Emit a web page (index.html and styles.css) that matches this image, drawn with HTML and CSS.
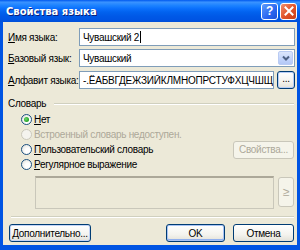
FILE: index.html
```html
<!DOCTYPE html>
<html lang="ru">
  <head>
    <meta charset="UTF-8" />
    <title>Свойства языка</title>
    <link rel="stylesheet" href="styles.css">
  </head>
  <body>
    <div class="window">
      <div class="titlebar">
        <span class="title">Свойства языка</span>
        <span class="tb-btn help">?</span>
        <span class="tb-btn close">
          <svg width="10" height="10" viewBox="0 0 10 10"><path d="M1.5 1.5 L8.5 8.5 M8.5 1.5 L1.5 8.5" stroke="#fff" stroke-width="2" stroke-linecap="square"/></svg>
        </span>
      </div>
      <div class="client">
        <div class="row">
          <label class="lbl"><u>И</u>мя языка:</label>
          <div class="field">Чувашский 2<span class="caret"></span></div>
        </div>
        <div class="row">
          <label class="lbl"><u>Б</u>азовый язык:</label>
          <div class="field combo">
            <span class="val">Чувашский</span>
            <span class="drop">
              <svg width="8" height="6" viewBox="0 0 8 6"><path d="M1 1.5 L4 4.5 L7 1.5" fill="none" stroke="#4d6185" stroke-width="2"/></svg>
            </span>
          </div>
        </div>
        <div class="row">
          <label class="lbl"><u>А</u>лфавит языка:</label>
          <div class="field alpha"><span class="val">-.ЁАБВГДЕЖЗИЙКЛМНОПРСТУФХЦЧШЩЪЫЬЭЮЯ</span></div>
          <span class="btn dots">...</span>
        </div>

        <div class="group">
          <span>Словарь</span>
          <span class="etch"></span>
        </div>
        <div class="radio-row">
          <span class="radio checked"></span>
          <span><u>Н</u>ет</span>
        </div>
        <div class="radio-row disabled">
          <span class="radio"></span>
          <span>Встроенный словарь недоступен.</span>
        </div>
        <div class="radio-row">
          <span class="radio"></span>
          <span><u>П</u>ользовательский словарь</span>
          <span class="btn off props">Свойства...</span>
        </div>
        <div class="radio-row">
          <span class="radio"></span>
          <span><u>Р</u>егулярное выражение</span>
        </div>
        <div class="regex">
          <div class="regex-box"></div>
          <span class="btn off ge">≥</span>
        </div>

        <div class="sep"></div>

        <div class="buttons">
          <span class="btn focus wide"><u>Д</u>ополнительно...</span>
          <span class="spacer"></span>
          <span class="btn default ok">OK</span>
          <span class="btn cancel">Отмена</span>
        </div>
      </div>
    </div>
  </body>
</html>
```

FILE: styles.css
```css
body {
  margin: 0;
  font-family: "Liberation Sans", Arial, sans-serif;
  font-size: 10px;
  letter-spacing: -0.3px;
  color: #000;
  background: #fff;
}
u {
  text-decoration: underline;
  text-underline-offset: 1px;
}
.window {
  width: 300px;
  height: 250px;
  box-sizing: border-box;
  background: #0054e3;
  display: flex;
  flex-direction: column;
}
.titlebar {
  height: 22px;
  display: flex;
  align-items: center;
  padding: 0 3px 0 6px;
  background: linear-gradient(to bottom, #0058ee 0%, #3a93ff 10%, #1c82ff 25%, #0a6ffc 40%, #0262ee 55%, #0058e6 75%, #0054e3 90%, #0050d8 100%);
}
.title {
  flex: 1;
  color: #fff;
  font-family: "DejaVu Sans", sans-serif;
  font-weight: bold;
  font-size: 10px;
  letter-spacing: 0;
  text-shadow: 1px 1px 0 #0a1e7a;
}
.tb-btn {
  width: 15px;
  height: 15px;
  border: 1px solid #fff;
  border-radius: 3px;
  display: flex;
  align-items: center;
  justify-content: center;
  color: #fff;
  font-weight: bold;
  font-size: 12px;
  margin-left: 2px;
}
.help {
  background: linear-gradient(135deg, #5f9cfb, #2a66f0 60%, #1d4fd8);
}
.close {
  background: linear-gradient(135deg, #f08f6e, #e2552c 50%, #c83e18);
}
.client {
  flex: 1;
  margin: 0 3px 5px 3px;
  background: #ece9d8;
  padding: 6px 2px 0 5px;
  display: flex;
  flex-direction: column;
}
.row {
  display: flex;
  align-items: center;
  height: 18px;
  margin-bottom: 3px;
}
.row + .row + .row {
  margin-top: 1px;
}
.lbl {
  width: 71px;
  white-space: nowrap;
}
.field {
  flex: 1;
  height: 18px;
  box-sizing: border-box;
  border: 1px solid #7f9db9;
  background: #fff;
  display: flex;
  align-items: center;
  padding-left: 3px;
  overflow: hidden;
  white-space: nowrap;
}
.caret {
  width: 1px;
  height: 12px;
  background: #000;
  margin-left: 1px;
}
.combo {
  padding-right: 1px;
}
.combo .val {
  flex: 1;
}
.drop {
  width: 15px;
  height: 14px;
  border: 1px solid #b9cbf3;
  border-radius: 2px;
  background: linear-gradient(to bottom, #dce6fc, #c1d3fb 60%, #b4c8f6);
  display: flex;
  align-items: center;
  justify-content: center;
  box-sizing: border-box;
}
.alpha {
  margin-right: 3px;
}
.alpha .val {
  flex: 1;
  min-width: 0;
  overflow: hidden;
  letter-spacing: -0.2px;
}
.btn {
  box-sizing: border-box;
  height: 18px;
  border: 1px solid #003c74;
  border-radius: 3px;
  background: linear-gradient(to bottom, #ffffff, #f4f3ee 60%, #e3e1d8);
  display: flex;
  align-items: center;
  justify-content: center;
  white-space: nowrap;
}
.dots {
  width: 18px;
  box-shadow: inset 0 0 0 1px #b7cdf5;
  padding-bottom: 3px;
}
.group {
  display: flex;
  align-items: center;
  height: 13px;
  margin-top: 5px;
}
.etch {
  flex: 1;
  height: 0;
  border-top: 1px solid #d0d0bf;
  border-bottom: 1px solid #fff;
  margin: 0 1px 0 8px;
}
.radio-row {
  display: flex;
  align-items: center;
  height: 15px;
  margin-left: 13px;
}
.group + .radio-row {
  margin-top: 2px;
}
.radio {
  width: 11px;
  height: 11px;
  box-sizing: border-box;
  border: 1px solid #1c5180;
  border-radius: 50%;
  background: radial-gradient(circle at 65% 65%, #fff 30%, #dcdcd6 100%);
  margin-right: 2px;
  display: flex;
  align-items: center;
  justify-content: center;
}
.radio.checked::after {
  content: "";
  width: 5px;
  height: 5px;
  border-radius: 50%;
  background: radial-gradient(circle at 40% 40%, #6fd96f, #21a121 70%);
}
.disabled {
  color: #aca899;
}
.disabled .radio {
  border-color: #cac8bb;
  background: #f4f3ee;
}
.props {
  margin-left: auto;
  width: 61px;
  margin-right: 1px;
}
.off {
  border-color: #c9c7ba;
  color: #aca899;
  background: #f5f4ea;
}
.regex {
  display: flex;
  margin: 4px 1px 0 27px;
}
.regex-box {
  width: 240px;
  height: 33px;
  box-sizing: border-box;
  border: 1px solid #c9c7ba;
  border-top: 2px solid #aca899;
  background: #ece9d8;
  margin-right: 4px;
}
.ge {
  width: 16px;
  height: 30px;
  margin-top: 1px;
  font-size: 12px;
}
.sep {
  height: 0;
  border-top: 1px solid #d0d0bf;
  border-bottom: 1px solid #fff;
  margin: 7px 1px 0 3px;
}
.buttons {
  display: flex;
  margin: 6px 1px 0 1px;
}
.spacer {
  flex: 1;
}
.wide {
  width: 82px;
}
.focus {
  box-shadow: inset 0 0 0 1px #c3d4f6;
}
.ok {
  width: 59px;
  margin-right: 8px;
  box-shadow: inset 0 0 0 1px #a8c3f4, inset 0 -1px 0 1px #91b0ee;
}
.cancel {
  width: 61px;
}
```
